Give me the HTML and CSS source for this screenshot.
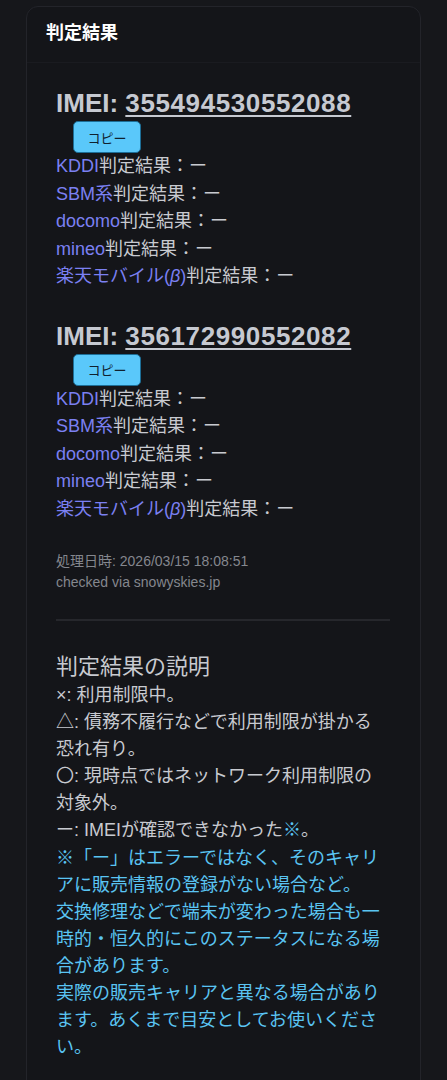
FILE: index.html
```html
<!DOCTYPE html>
<html lang="ja">
<head>
<meta charset="utf-8">
<title>判定結果</title>
<link rel="stylesheet" href="styles.css">
</head>
<body>
<div class="page">
  <section class="card">
    <header class="card-header">判定結果</header>
    <div class="card-body">
      <div class="imei-block">
        <h2 class="imei-title">IMEI: <a class="imei-num" href="#">355494530552088</a></h2>
        <button class="copy-btn" type="button">コピー</button>
        <ul class="results">
          <li><span class="carrier">KDDI</span>判定結果：ー</li>
          <li><span class="carrier">SBM系</span>判定結果：ー</li>
          <li><span class="carrier">docomo</span>判定結果：ー</li>
          <li><span class="carrier">mineo</span>判定結果：ー</li>
          <li><span class="carrier">楽天モバイル(<i>β</i>)</span>判定結果：ー</li>
        </ul>
      </div>
      <div class="imei-block">
        <h2 class="imei-title">IMEI: <a class="imei-num" href="#">356172990552082</a></h2>
        <button class="copy-btn" type="button">コピー</button>
        <ul class="results">
          <li><span class="carrier">KDDI</span>判定結果：ー</li>
          <li><span class="carrier">SBM系</span>判定結果：ー</li>
          <li><span class="carrier">docomo</span>判定結果：ー</li>
          <li><span class="carrier">mineo</span>判定結果：ー</li>
          <li><span class="carrier">楽天モバイル(<i>β</i>)</span>判定結果：ー</li>
        </ul>
      </div>
      <div class="meta">
        <div>処理日時: 2026/03/15 18:08:51</div>
        <div>checked via snowyskies.jp</div>
      </div>
      <hr class="divider">
      <h3 class="legend-title">判定結果の説明</h3>
      <div class="legend">
        <div>×: 利用制限中。</div>
        <div><span class="sym">△</span>: 債務不履行などで利用制限が掛かる恐れ有り。</div>
        <div><span class="sym">〇</span>: 現時点ではネットワーク利用制限の対象外。</div>
        <div>ー: IMEIが確認できなかった<span class="note-mark">※</span>。</div>
        <div class="note">※「ー」はエラーではなく、そのキャリアに販売情報の登録がない場合など。</div>
        <div class="note">交換修理などで端末が変わった場合も一時的・恒久的にこのステータスになる場合があります。</div>
        <div class="note">実際の販売キャリアと異なる場合があります。あくまで目安としてお使いください。</div>
      </div>
    </div>
  </section>
</div>
</body>
</html>
```

FILE: styles.css
```css
html, body {
  margin: 0;
  padding: 0;
  background: #16171b;
}
body {
  font-family: "Liberation Sans", "Noto Sans CJK JP", sans-serif;
  color: #c8cad0;
}
.page {
  padding: 6px 26px 0 26px;
}
.card {
  background: #141519;
  border: 1px solid #23242a;
  border-radius: 12px;
  min-height: 1100px;
}
.card-header {
  padding: 14px 20px 17px 19px;
  font-size: 18px;
  line-height: 24px;
  font-weight: 700;
  color: #ffffff;
  border-bottom: 1px solid #1a1b20;
}
.card-body {
  padding: 25px 34px 20px 29px;
}
.imei-block + .imei-block {
  margin-top: 30px;
}
.imei-title {
  margin: 0;
  font-size: 26px;
  line-height: 31px;
  font-weight: 700;
  color: #c6c9d1;
}
.imei-num {
  color: #c6c9d1;
  text-decoration: underline;
  text-decoration-thickness: 2px;
  text-underline-offset: 3px;
  letter-spacing: 0.6px;
}
.copy-btn {
  display: block;
  margin: 2px 0 0 17px;
  width: 68px;
  height: 32px;
  padding: 0;
  background: #5ac8fa;
  border: 1px solid #1d6e97;
  border-radius: 5px;
  font-family: "Noto Sans CJK JP", sans-serif;
  font-size: 13px;
  color: #10212e;
}
.results {
  list-style: none;
  margin: 0;
  padding: 0;
  font-size: 18px;
  line-height: 27.5px;
}
.carrier {
  color: #7b80f2;
}
.carrier i {
  font-style: italic;
}
.meta {
  margin-top: 28px;
  font-size: 14px;
  line-height: 21px;
  color: #84878e;
}
.divider {
  margin: 26px -4px 0 0;
  border: 0;
  height: 2px;
  background: #26272c;
}
.legend-title {
  margin: 28px 0 0 0;
  font-family: "Noto Sans CJK JP", sans-serif;
  font-size: 22px;
  line-height: 30px;
  font-weight: 400;
  color: #c8cad0;
}
.legend {
  margin-top: 3px;
  font-size: 18px;
  line-height: 27.1px;
}
.sym {
  font-family: "Noto Sans CJK JP", sans-serif;
  line-height: 1;
}
.note, .note-mark {
  color: #5ac4f2;
}
```
